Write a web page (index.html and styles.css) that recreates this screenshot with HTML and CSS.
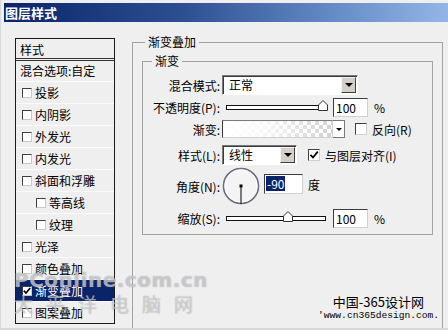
FILE: index.html
```html
<!DOCTYPE html>
<html lang="zh-CN">
<head>
<meta charset="utf-8">
<title>图层样式</title>
<link rel="stylesheet" href="styles.css">
</head>
<body>
<div class="window">
  <div class="titlebar">图层样式</div>
  <div class="content">
    <div class="list">
      <div class="list-head">样式</div>
      <div class="list-blend">混合选项:自定</div>
      <div class="list-item"><span class="cb"></span>投影</div>
      <div class="list-item"><span class="cb"></span>内阴影</div>
      <div class="list-item"><span class="cb"></span>外发光</div>
      <div class="list-item"><span class="cb"></span>内发光</div>
      <div class="list-item"><span class="cb"></span>斜面和浮雕</div>
      <div class="list-item sub"><span class="cb"></span>等高线</div>
      <div class="list-item sub"><span class="cb"></span>纹理</div>
      <div class="list-item"><span class="cb"></span>光泽</div>
      <div class="list-item"><span class="cb"></span>颜色叠加</div>
      <div class="list-item selected"><span class="cb"><svg width="8" height="8" viewBox="0 0 8 8"><polyline points="0.8,3.6 3,6 7.2,1" fill="none" stroke="#000" stroke-width="1.6"/></svg></span>渐变叠加</div>
      <div class="list-item"><span class="cb"></span>图案叠加</div>
    </div>

    <fieldset class="group outer">
      <legend>渐变叠加</legend>
      <fieldset class="group inner">
        <legend>渐变</legend>

        <div class="row r1">
          <span class="lbl">混合模式:</span>
          <div class="select w-mode"><span class="val">正常</span><span class="btn"><i class="tri"></i></span></div>
        </div>

        <div class="row r2">
          <span class="lbl">不透明度(P):</span>
          <div class="slider"><svg class="thumb" style="left: 91px" width="10" height="11" viewBox="0 0 10 11"><polygon points="0.5,5 5,0.5 9.5,5 9.5,10.5 0.5,10.5" fill="#fff" stroke="#333"/></svg></div>
          <span class="num">100</span>
          <span class="unit">%</span>
        </div>

        <div class="row r3">
          <span class="lbl">渐变:</span>
          <div class="grad"></div>
          <span class="gbtn"><i class="tri small"></i></span>
          <span class="cbx cbx-rev"></span>
          <span class="cbx-label">反向(R)</span>
        </div>

        <div class="row r4">
          <span class="lbl">样式(L):</span>
          <div class="select w-style"><span class="val">线性</span><span class="btn"><i class="tri"></i></span></div>
          <span class="cbx cbx-align"><svg width="10" height="10" viewBox="0 0 10 10"><polyline points="1.5,4.8 4,7.5 8.8,1.6" fill="none" stroke="#000" stroke-width="1.8"/></svg></span>
          <span class="cbx-label">与图层对齐(I)</span>
        </div>

        <div class="row r5">
          <span class="lbl">角度(N):</span>
          <svg class="dial" width="38" height="38" viewBox="0 0 38 38">
            <circle cx="19" cy="19" r="17.5" fill="#f4f4f4" stroke="#6c6c7c" stroke-width="1.6"/>
            <circle cx="19" cy="19" r="16.2" fill="none" stroke="#ffffff" stroke-width="0.8"/>
            <line x1="19" y1="19" x2="19" y2="37" stroke="#000" stroke-width="1"/>
            <rect x="17.5" y="17.5" width="3" height="3" fill="#000"/>
          </svg>
          <span class="num angle"><span class="sel">-90</span></span>
          <span class="deg">度</span>
        </div>

        <div class="row r6">
          <span class="lbl">缩放(S):</span>
          <div class="slider"><svg class="thumb" style="left: 56px" width="10" height="11" viewBox="0 0 10 11"><polygon points="0.5,5 5,0.5 9.5,5 9.5,10.5 0.5,10.5" fill="#fff" stroke="#333"/></svg></div>
          <span class="num">100</span>
          <span class="unit">%</span>
        </div>
      </fieldset>
    </fieldset>
  </div>

  <div class="wm-pc">
    <div class="wm-pc-en">PConline.com.cn</div>
    <div class="wm-pc-cn">太平洋电脑网</div>
  </div>
  <div class="wm-site">
    <div class="wm-site-cn">中国-365设计网</div>
    <div class="wm-site-url">'www.cn365design.com.</div>
  </div>
</div>
</body>
</html>
```

FILE: styles.css
```css
* { box-sizing: border-box; }
html, body { margin: 0; padding: 0; }
body {
  width: 448px;
  height: 330px;
  overflow: hidden;
  background: #efefef;
  font-family: "Noto Sans CJK SC", "Liberation Sans", sans-serif;
  font-size: 12px;
  color: #000;
}
.window {
  position: relative;
  width: 448px;
  height: 330px;
  overflow: hidden;
  background: #efefef;
  padding: 3px 0 0 3px;
  border-left: 1px solid #d8d8d8;
  border-bottom: 2px solid #d8d8d8;
}
.titlebar {
  height: 19px;
  line-height: 19px;
  padding-left: 1px;
  color: #fff;
  font-weight: bold;
  font-size: 13px;
  background: linear-gradient(90deg, #0a246a 0%, #2c4f92 40%, #6f95cf 80%, #94b6e6 100%);
}
.content {
  display: flex;
  align-items: flex-start;
  padding-left: 11px;
}

/* list */
.list {
  margin-top: 16px;
  width: 100px;
  border: 1px solid #1a1a1a;
  background: #efefef;
  flex: none;
}
.list-head {
  height: 22px;
  line-height: 22px;
  padding-left: 4px;
  border-bottom: 3px double #333;
}
.list-blend {
  height: 20px;
  line-height: 20px;
  padding-left: 4px;
}
.list-item {
  height: 22px;
  display: flex;
  align-items: center;
  padding-left: 6px;
  border-top: 1px solid #fbfbfb;
}
.list-item.sub { padding-left: 20px; }
.list-item.selected {
  background: #0a246a;
  color: #fff;
}
.cb {
  width: 10px;
  height: 10px;
  margin-right: 3px;
  background: #fff;
  border: 1px solid;
  border-color: #404040 #c8c8c8 #c8c8c8 #404040;
  display: flex;
  align-items: center;
  justify-content: center;
  flex: none;
}

/* groups */
.group {
  margin: 0;
  border: 1px solid #a3a3a3;
  min-width: 0;
}
.group legend {
  padding: 0 3px;
  line-height: 14px;
  font-size: 12px;
}
.outer {
  margin: 13px 0 0 17px;
  width: 311px;
  height: 320px;
  padding: 5px 9px 0 9px;
}
.outer > legend { margin-left: 3px; }
.inner {
  padding: 0 0 5px 0;
}
.inner > legend { margin-left: 9px; }

.row {
  display: flex;
  align-items: center;
}
.r1 { height: 20px; margin-top: 7px; }
.r2 { height: 21px; margin-top: 2px; }
.r3 { height: 18px; margin-top: 2px; }
.r4 { height: 20px; margin-top: 7px; }
.r5 { height: 38px; margin-top: 2px; align-items: flex-start; }
.r6 { height: 21px; margin-top: 3px; }

.lbl {
  width: 79px;
  flex: none;
  text-align: right;
  padding-right: 2px;
  white-space: nowrap;
}
.r5 .lbl { margin-top: 11px; }

/* select */
.select {
  display: flex;
  height: 20px;
  background: #fff;
  border: 1px solid;
  border-color: #7a7a7a #ffffff #ffffff #7a7a7a;
  box-shadow: inset 1px 1px 0 #3a3a3a;
  flex: none;
}
.w-mode { width: 136px; }
.w-style { width: 75px; }
.val {
  flex: 1;
  padding-left: 6px;
  line-height: 18px;
}
.btn {
  width: 15px;
  height: 16px;
  margin: 1px 1px 1px 0;
  background: #d4d0c8;
  border: 1px solid;
  border-color: #f4f4f4 #404040 #404040 #f4f4f4;
  display: flex;
  align-items: center;
  justify-content: center;
}
.tri {
  display: block;
  width: 0;
  height: 0;
  border-left: 4px solid transparent;
  border-right: 4px solid transparent;
  border-top: 4px solid #000;
}
.tri.small {
  border-left-width: 3px;
  border-right-width: 3px;
  border-top-width: 3px;
}

/* slider */
.slider {
  position: relative;
  width: 100px;
  height: 5px;
  margin-left: 4px;
  border: 1px solid #111;
  background: #fff;
  flex: none;
}
.thumb {
  position: absolute;
  top: -6px;
}
.num {
  width: 35px;
  height: 19px;
  margin-left: 7px;
  background: #fff;
  border: 1px solid;
  border-color: #3c3c3c #d0d0d0 #d0d0d0 #3c3c3c;
  padding-left: 2px;
  line-height: 17px;
  flex: none;
}
.unit { margin-left: 6px; }

/* gradient */
.grad {
  width: 111px;
  height: 18px;
  border: 1px solid;
  border-color: #7a7a7a #d0d0d0 #d0d0d0 #3a3a3a;
  background:
    linear-gradient(90deg, #ffffff 0%, rgba(255,255,255,0.85) 35%, rgba(255,255,255,0) 100%),
    conic-gradient(#d2d2d2 25%, #ffffff 0 50%, #d2d2d2 0 75%, #ffffff 0) 0 0 / 8px 8px;
  flex: none;
}
.gbtn {
  width: 12px;
  height: 18px;
  background: #fff;
  border: 1px solid #7a7a7a;
  border-left: none;
  display: flex;
  align-items: center;
  justify-content: center;
  flex: none;
}
.cbx {
  width: 12px;
  height: 12px;
  background: #fff;
  border: 1px solid;
  border-color: #404040 #d0d0d0 #d0d0d0 #404040;
  display: flex;
  align-items: center;
  justify-content: center;
  flex: none;
}
.cbx-rev { margin-left: 10px; }
.cbx-align { margin-left: 11px; }
.cbx-label { margin-left: 5px; white-space: nowrap; }

/* angle */
.dial { flex: none; }
.angle {
  width: 39px;
  height: 20px;
  margin-left: 4px;
  margin-top: 7px;
  padding-left: 1px;
  line-height: 18px;
}
.sel {
  background: #0a246a;
  color: #fff;
  padding: 0 1px;
  display: inline-block;
  line-height: 15px;
}
.deg { margin-left: 5px; margin-top: 9px; }

/* watermarks */
.wm-pc {
  position: absolute;
  left: 13px;
  top: 268px;
  pointer-events: none;
}
.wm-pc-en {
  font-family: "DejaVu Sans", "Liberation Sans", sans-serif;
  font-size: 20px;
  font-weight: bold;
  letter-spacing: 0.5px;
  color: rgba(255, 255, 255, 0.55);
  text-shadow: 0 0 1px rgba(90, 90, 100, 0.7);
  line-height: 24px;
}
.wm-pc-cn {
  font-size: 19px;
  letter-spacing: 13px;
  color: rgba(255, 255, 255, 0.5);
  text-shadow: 0 0 1px rgba(90, 90, 100, 0.65);
  line-height: 24px;
}
.wm-site {
  position: absolute;
  right: 9px;
  top: 293px;
  text-align: right;
}
.wm-site-cn {
  font-size: 13px;
  line-height: 17px;
  padding-right: 15px;
}
.wm-site-url {
  font-family: "Liberation Mono", "DejaVu Sans Mono", monospace;
  font-size: 9.6px;
  line-height: 12px;
}
```
